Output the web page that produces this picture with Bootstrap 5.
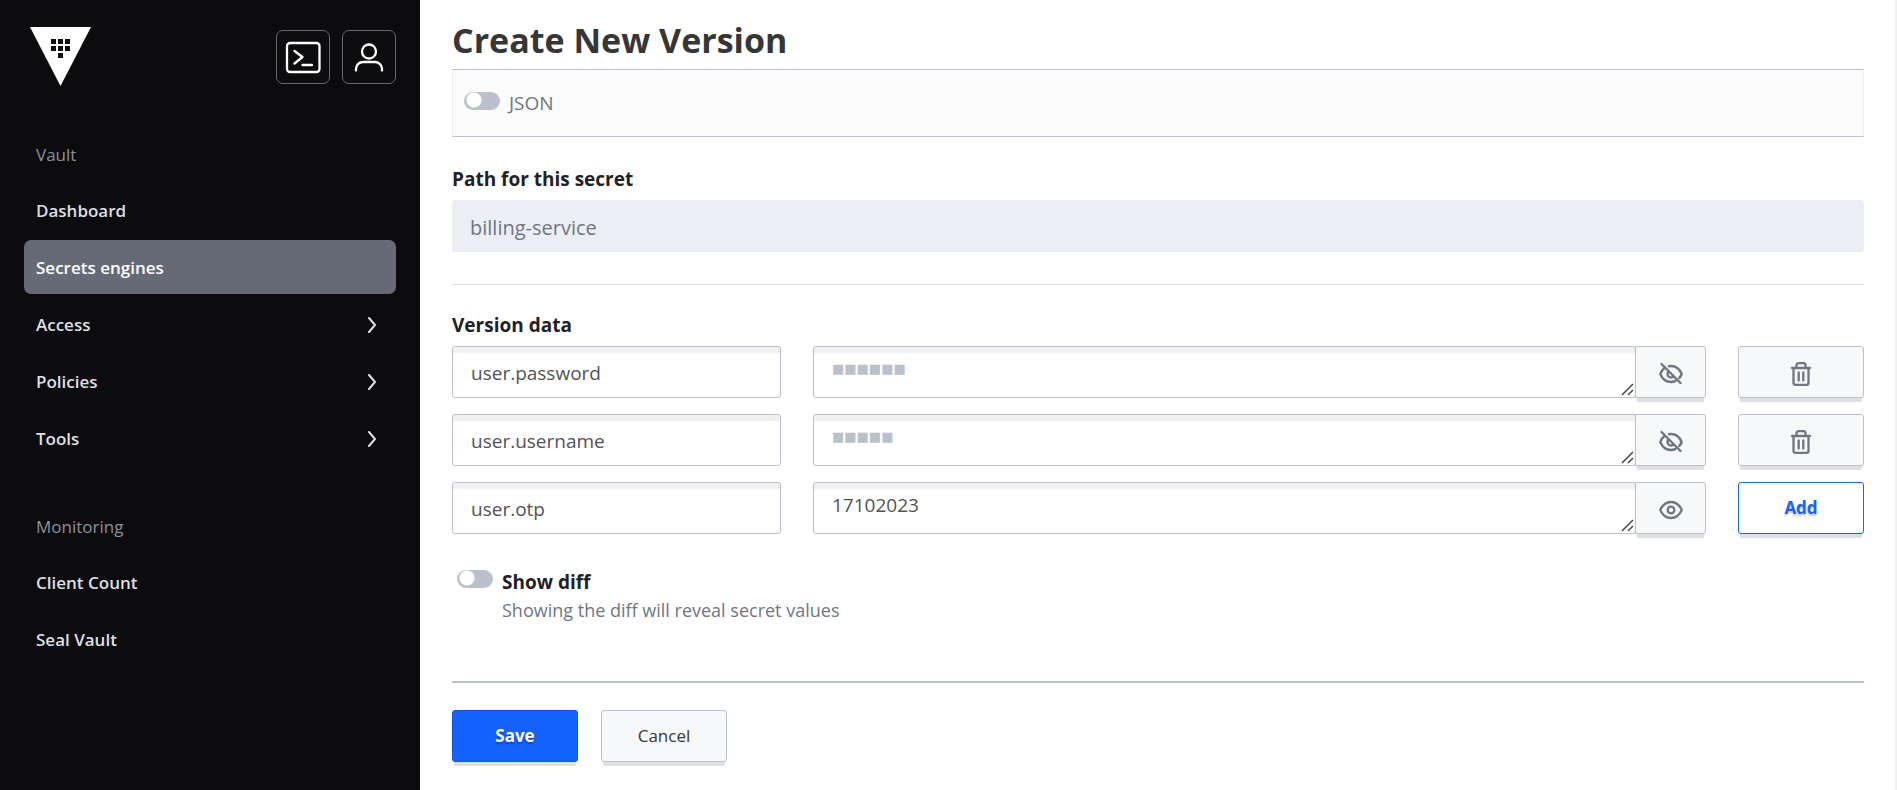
<!DOCTYPE html>
<html lang="en">
<head>
<meta charset="utf-8">
<meta name="viewport" content="width=device-width, initial-scale=1">
<title>Vault - Create New Version</title>
<link href="https://cdn.jsdelivr.net/npm/bootstrap@5.3.0/dist/css/bootstrap.min.css" rel="stylesheet">
<style>
  :root { --line: #bac1cc; --ink: #1f2124; --blue: #1563ff; }
  body { font-family: "Open Sans", "Noto Sans", sans-serif; font-size: 18px; line-height: 28px; color: var(--ink); }

  .side-nav { width: 420px; background: #0c0c0e; padding: 27px 24px 24px; }
  .side-top { height: 114px; padding-left: 6px; }
  .tool-set { gap: 12px; }
  .tool-btn { width: 54px; height: 54px; padding: 0; margin-top: 3px; border: 1px solid #656a76; border-radius: 7px; background: transparent; color: #fff; }
  .side-heading { font-size: 17px; line-height: 28px; font-weight: 500; color: #8c909c; padding: 0 12px; margin-bottom: 14px; }
  .side-nav ul { gap: 3px; margin-bottom: 48px; }
  .side-link { height: 54px; padding: 1px 14px 0 12px; border-radius: 7px; font-size: 17px; font-weight: 600; color: #dedfe3; text-decoration: none; }
  .side-link.active { background: #656a76; color: #fff; }

  .main-pane { padding: 16px 31px 24px 32px; border-right: 2px solid #f0f0f0; }
  .page-title { font-size: 34px; line-height: 48px; font-weight: 700; color: #363636; margin-bottom: 5px; }
  .toolbar-box { height: 68px; padding: 22px 11px 0; gap: 9px; background: #fbfbfb; border: 1px solid #ebeef2; border-top-color: var(--line); border-bottom-color: var(--line); margin-bottom: 28px; }
  .toolbar-box .soft-text { font-size: 19px; line-height: 22px; }
  .field-label { font-size: 19px; line-height: 28px; font-weight: 700; margin-bottom: 7px; }
  .field-box { height: 52px; padding: 2px 18px 0; border: 1px solid var(--line); border-radius: 3px; font-size: 19px; line-height: 28px; color: #535353; box-shadow: inset 0 6px 1px #f0f0f0; }
  .field-box[readonly] { padding-left: 17px; font-size: 20px; background: #ebeef2; border-color: #ebeef2; color: #6f7682; box-shadow: none; }
  .section-line { margin: 32px 0 26px; border-top: 1px solid #dce0e6; opacity: 1; }

  .pair-list { display: grid; gap: 16px; }
  .pair-row { --bs-gutter-x: 32px; }
  .value-box { min-height: 52px; padding-top: 8px; resize: vertical; overflow: hidden; }
  .value-box::-webkit-resizer { background: url("data:image/svg+xml,%3Csvg xmlns='http://www.w3.org/2000/svg' width='15' height='15'%3E%3Cpath d='M2 13L13 2M8 13l5-5' stroke='%23484848' stroke-width='1.500'/%3E%3C/svg%3E") no-repeat; }
  .masked { font-family: "DejaVu Sans", sans-serif; font-size: 13px; color: var(--line); }
  .act-btn { width: 126px; height: 52px; padding: 0; border: 1px solid var(--line); border-radius: 3px; background: #f7f8fa; color: #363636; font-size: 17px; box-shadow: 0 6px 1px -2px #dfdfdf; }
  .eye-btn, .trash-btn { padding-top: 2px; color: #6f7682; }
  .eye-btn { width: 71px; margin-left: -1px; border-radius: 0 3px 3px 0; }
  .add-btn { background: #fff; border-color: var(--blue); color: var(--blue); font-weight: 700; text-shadow: 0 2px 2px #c8c8c8; }
  .save-btn { background: var(--blue); border-color: #0f57e6; color: #fff; font-weight: 700; text-shadow: 0 2px 2px #0a46c0; }

  .form-check-input.pill { width: 36px; height: 18px; margin: 0; border: 0; background-color: var(--line); background-image: radial-gradient(circle at 10px 8px, #fff 7px, transparent 8px); background-size: 100% 100%; }
  .soft-text { color: #6f7682; font-size: 18px; line-height: 28px; }
  .diff-row { padding: 34px 0 0 5px; gap: 9px; margin-bottom: 57px; }
  .diff-row .form-check-input { margin-top: 2px; }
  .actions { border-top: 2px solid var(--line); padding-top: 27px; gap: 23px; }
</style>
</head>
<body>
<svg class="d-none" aria-hidden="true">
  <symbol id="i-chev" viewBox="0 0 16 16"><path d="M5 1l6 7-6 7" fill="none" stroke="currentColor" stroke-width="2" stroke-linecap="round" stroke-linejoin="round"/></symbol>
  <symbol id="i-eye" viewBox="0 0 24 24"><g fill="none" stroke="currentColor" stroke-width="2.300" stroke-linejoin="round"><path d="M1.200 12C3.500 7 7.500 4 12 4s8.500 3 10.800 8c-2.300 5-6.300 8-10.800 8s-8.500-3-10.800-8z"/><circle cx="12" cy="12" r="3.300"/></g></symbol>
  <symbol id="i-eye-off" viewBox="0 0 24 24"><g fill="none" stroke="currentColor" stroke-width="2.400" stroke-linecap="round" stroke-linejoin="round"><path d="M2.500 2l19 19M5.500 6C3.500 7.500 2 9.500 1.300 12c2 5 6 8 10.700 8 1.500 0 3-.3 4.300-.9M10 4.200c5.500-.8 10.300 2.300 12.700 7.800-.5 1.500-1.300 2.800-2.400 4M9.500 9.500a3.500 3.500 0 0 0 5 5"/></g></symbol>
  <symbol id="i-trash" viewBox="0 0 24 24"><g fill="none" stroke="currentColor" stroke-width="2.300" stroke-linecap="round" stroke-linejoin="round"><path d="M3 6h18M4.500 6v15a1.800 1.800 0 0 0 1.800 1.800h11.400a1.800 1.800 0 0 0 1.800-1.800V6M7.500 6V3.200a2 2 0 0 1 2-2h5a2 2 0 0 1 2 2V6M9.700 10.500v8M14.300 10.500v8"/></g></symbol>
</svg>

<div class="d-flex min-vh-100">
  <nav class="side-nav flex-shrink-0" aria-label="Vault">
    <div class="side-top d-flex align-items-start justify-content-between">
      <a href="#" aria-label="Vault home" class="d-flex">
        <svg width="61" height="59" viewBox="0 0 61 59"><path d="M0 0h61L30.500 59z" fill="#fff"/><path d="M21 12h5v5h-5zM28 12h5v5h-5zM35 12h5v5h-5zM21 19h5v5h-5zM28 19h5v5h-5zM35 19h5v5h-5zM28 26h5v5h-5z" fill="#0c0c0e"/></svg>
      </a>
      <div class="d-flex tool-set">
        <button class="tool-btn d-flex align-items-center justify-content-center" aria-label="Console">
          <svg width="36" height="36" viewBox="0 0 36 36" fill="none" stroke="currentColor" stroke-width="2.300" stroke-linecap="round" stroke-linejoin="round"><rect x="2" y="4" width="32.500" height="29" rx="3"/><path d="M9.500 12l8 6-8 6.500M17.500 26h9.500"/></svg>
        </button>
        <button class="tool-btn d-flex align-items-center justify-content-center" aria-label="User menu">
          <svg width="36" height="36" viewBox="0 0 36 36" fill="none" stroke="currentColor" stroke-width="2.300" stroke-linecap="round"><circle cx="18" cy="12.500" r="7"/><path d="M5 31.500v-2a7 7 0 0 1 7-6.500h12a7 7 0 0 1 7 6.500v2"/></svg>
        </button>
      </div>
    </div>
    <div class="side-heading">Vault</div>
    <ul class="list-unstyled d-flex flex-column">
      <li><a href="#" class="side-link d-flex align-items-center">Dashboard</a></li>
      <li><a href="#" class="side-link active d-flex align-items-center" aria-current="page">Secrets engines</a></li>
      <li><a href="#" class="side-link d-flex align-items-center justify-content-between">Access<svg width="20" height="16"><use href="#i-chev"/></svg></a></li>
      <li><a href="#" class="side-link d-flex align-items-center justify-content-between">Policies<svg width="20" height="16"><use href="#i-chev"/></svg></a></li>
      <li><a href="#" class="side-link d-flex align-items-center justify-content-between">Tools<svg width="20" height="16"><use href="#i-chev"/></svg></a></li>
    </ul>
    <div class="side-heading">Monitoring</div>
    <ul class="list-unstyled d-flex flex-column">
      <li><a href="#" class="side-link d-flex align-items-center">Client Count</a></li>
      <li><a href="#" class="side-link d-flex align-items-center">Seal Vault</a></li>
    </ul>
  </nav>

  <main class="main-pane flex-grow-1">
    <h1 class="page-title">Create New Version</h1>
    <form>
      <div class="toolbar-box d-flex align-items-start">
        <input class="form-check-input pill rounded-pill" type="checkbox" role="switch" id="json">
        <label class="soft-text" for="json">JSON</label>
      </div>
      <label class="field-label d-block" for="path">Path for this secret</label>
      <input class="form-control field-box" id="path" value="billing-service" readonly>
      <hr class="section-line">
      <div class="field-label">Version data</div>
      <div class="pair-list">
        <div class="row pair-row">
          <div class="col-3"><input class="form-control field-box" aria-label="Key 1" value="user.password"></div>
          <div class="col d-flex">
            <textarea class="form-control field-box value-box masked" rows="1" aria-label="Value 1">■■■■■■</textarea>
            <button type="button" class="act-btn eye-btn flex-shrink-0" aria-label="Show value"><svg width="24" height="24"><use href="#i-eye-off"/></svg></button>
          </div>
          <div class="col-auto"><button type="button" class="act-btn trash-btn" aria-label="Delete row"><svg width="24" height="24"><use href="#i-trash"/></svg></button></div>
        </div>
        <div class="row pair-row">
          <div class="col-3"><input class="form-control field-box" aria-label="Key 2" value="user.username"></div>
          <div class="col d-flex">
            <textarea class="form-control field-box value-box masked" rows="1" aria-label="Value 2">■■■■■</textarea>
            <button type="button" class="act-btn eye-btn flex-shrink-0" aria-label="Show value"><svg width="24" height="24"><use href="#i-eye-off"/></svg></button>
          </div>
          <div class="col-auto"><button type="button" class="act-btn trash-btn" aria-label="Delete row"><svg width="24" height="24"><use href="#i-trash"/></svg></button></div>
        </div>
        <div class="row pair-row">
          <div class="col-3"><input class="form-control field-box" aria-label="Key 3" value="user.otp"></div>
          <div class="col d-flex">
            <textarea class="form-control field-box value-box" rows="1" aria-label="Value 3">17102023</textarea>
            <button type="button" class="act-btn eye-btn flex-shrink-0" aria-label="Hide value"><svg width="24" height="24"><use href="#i-eye"/></svg></button>
          </div>
          <div class="col-auto"><button type="button" class="act-btn add-btn">Add</button></div>
        </div>
      </div>
      <div class="diff-row d-flex align-items-start">
        <input class="form-check-input pill rounded-pill" type="checkbox" role="switch" id="diff">
        <div>
          <label class="field-label mb-0 d-block" for="diff">Show diff</label>
          <div class="soft-text">Showing the diff will reveal secret values</div>
        </div>
      </div>
      <div class="actions d-flex">
        <button type="submit" class="act-btn save-btn">Save</button>
        <button type="button" class="act-btn">Cancel</button>
      </div>
    </form>
  </main>
</div>
<script src="https://cdn.jsdelivr.net/npm/bootstrap@5.3.0/dist/js/bootstrap.bundle.min.js"></script>
</body>
</html>
